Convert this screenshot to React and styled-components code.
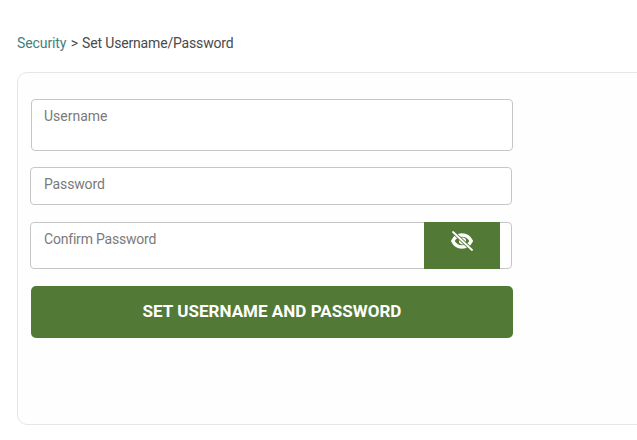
import { createGlobalStyle } from 'styled-components';
import styled from 'styled-components';

const Global = createGlobalStyle`
  html, body {
    margin: 0;
    padding: 0;
    background: #fff;
    overflow: hidden;
  }
  body {
    font-family: Roboto, "Liberation Sans", sans-serif;
  }
`;

const Page = styled.div`
  width: 637px;
  height: 440px;
  padding: 35px 0 0 17px;
  box-sizing: border-box;
  overflow: hidden;
`;

const Breadcrumb = styled.div`
  font-size: 14px;
  line-height: 17px;
  letter-spacing: -0.17px;
  color: #4a4a4a;
  margin-bottom: 20px;
`;

const Crumb = styled.a`
  color: #3f7f80;
  letter-spacing: -0.1px;
  text-decoration: none;
`;

const Separator = styled.span`
  margin: 0 1px;
`;

const Card = styled.div`
  width: 660px;
  height: 353px;
  box-sizing: border-box;
  background: #fefefe;
  border: 1px solid #e6e6e6;
  border-radius: 10px;
  padding: 26px 0 0 12px;
`;

const Form = styled.form`
  width: 484px;
  display: flex;
  flex-direction: column;
  align-items: flex-start;
`;

const Field = styled.div`
  width: 482px;
  height: ${(p) => p.$height}px;
  margin-left: ${(p) => p.$shift || 0}px;
  margin-bottom: ${(p) => p.$gap}px;
  box-sizing: border-box;
  background: #fff;
  border: 1px solid #c6c6c6;
  border-radius: 4px;
  display: flex;
  justify-content: space-between;
`;

const Placeholder = styled.span`
  font-size: 14px;
  line-height: 17px;
  letter-spacing: ${(p) => p.$tracking || 0}px;
  color: #7a7a7a;
  padding: 8px 0 0 ${(p) => 13 - (p.$shift || 0)}px;
`;

const EyeButton = styled.button`
  width: 76px;
  margin: -1px 11px -1px 0;
  border: none;
  padding: 0 0 9px;
  background: #527a36;
  color: #fff;
  display: flex;
  align-items: center;
  justify-content: center;
`;

const Submit = styled.button`
  width: 482px;
  height: 52px;
  margin-left: 1px;
  padding: 0 0 2px;
  border: none;
  border-radius: 5px;
  background: #527a36;
  color: #fff;
  font-family: inherit;
  font-size: 17px;
  font-weight: 700;
  letter-spacing: 0.03px;
  text-transform: uppercase;
`;

export default function App() {
  return (
    <Page>
      <Global />
      <Breadcrumb>
        <Crumb href="#">Security</Crumb> <Separator>&gt;</Separator> Set Username/Password
      </Breadcrumb>
      <Card>
        <Form onSubmit={(e) => e.preventDefault()}>
          <Field $height={52} $shift={1} $gap={16}>
            <Placeholder $shift={1}>Username</Placeholder>
          </Field>
          <Field $height={38} $gap={17}>
            <Placeholder $tracking={-0.15}>Password</Placeholder>
          </Field>
          <Field $height={47} $gap={17}>
            <Placeholder $tracking={-0.2}>Confirm Password</Placeholder>
            <EyeButton type="button" aria-label="Show password">
              <svg width="22" height="20" viewBox="0 0 22 20" fill="none" stroke="currentColor" strokeLinecap="round">
                <path d="M1.8 10 C4 5.5 7.5 4 11 4 C14.5 4 18 5.5 20.2 10 C18 14.5 14.5 16 11 16 C7.5 16 4 14.5 1.8 10 Z" strokeWidth="3.4" />
                <circle cx="11.5" cy="10" r="2.4" strokeWidth="2.4" />
                <path d="M2 1 L21 19" stroke="#527a36" strokeWidth="3.6" />
                <path d="M2 1 L21 19" strokeWidth="1.8" />
              </svg>
            </EyeButton>
          </Field>
          <Submit type="submit">Set Username and Password</Submit>
        </Form>
      </Card>
    </Page>
  );
}
